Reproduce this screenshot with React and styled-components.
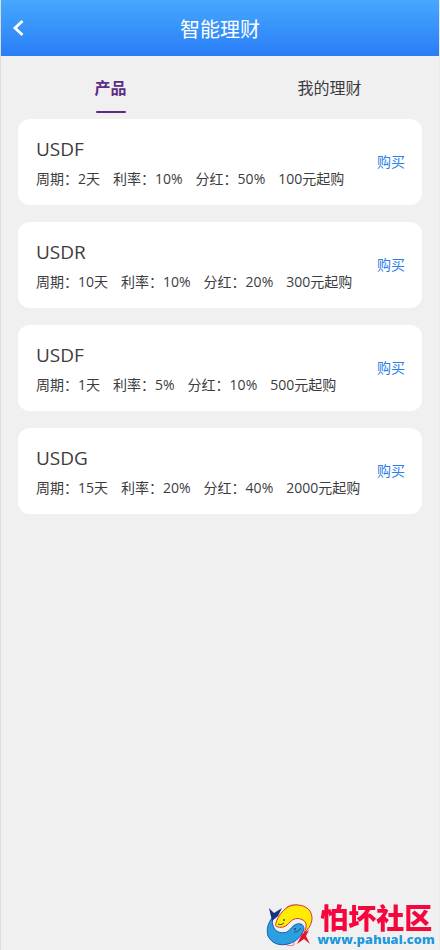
import { useState } from "react";
import styled, { createGlobalStyle } from "styled-components";

const palette = {
  text: "#3c3c3e",
  purple: "#5b2d82",
  blue: "#2d7fe6",
  page: "#f1f0f1",
};

const GlobalStyle = createGlobalStyle`
  * {
    box-sizing: border-box;
  }
  body {
    margin: 0;
    background: ${palette.page};
    color: ${palette.text};
    font-family: "Open Sans", "Noto Sans CJK SC", sans-serif;
  }
  button {
    border: 0;
    padding: 0;
    background: none;
    font-family: inherit;
    cursor: pointer;
  }
`;

const Page = styled.div`
  min-height: 100vh;
  border-left: 1px solid #dcdbe0;
  border-right: 1px solid #eae9ee;
`;

const Header = styled.header`
  display: grid;
  grid-template-columns: 34px 1fr 34px;
  align-items: center;
  height: 56px;
  background: linear-gradient(#46a8ff, #2a7df6);
  color: white;
`;

const BackButton = styled.button`
  display: flex;
  justify-content: center;
  color: white;
`;

const Title = styled.h1`
  margin: 0;
  padding-top: 4px;
  text-align: center;
  font-size: 20px;
  font-weight: 400;
  line-height: 28px;
`;

const Tabs = styled.nav`
  display: flex;
`;

const Tab = styled.button`
  flex: 1;
  display: flex;
  flex-direction: column;
  align-items: center;
  gap: 11px;
  padding-top: 20px;
  color: ${(props) => (props.$active ? palette.purple : palette.text)};
  font-size: 16px;
  font-weight: ${(props) => (props.$active ? 700 : 400)};
  line-height: 24px;
  &::after {
    content: "";
    width: 30px;
    height: 2px;
    border-radius: 1px;
    background: ${(props) => (props.$active ? palette.purple : "transparent")};
  }
`;

const List = styled.ul`
  display: flex;
  flex-direction: column;
  gap: 17px;
  margin: 0;
  padding: 6px 17px 80px;
  list-style: none;
`;

const Card = styled.li`
  display: flex;
  align-items: center;
  justify-content: space-between;
  padding: 16px 17px 16px 18px;
  border-radius: 12px;
  background: white;
`;

const Name = styled.h2`
  margin: 0 0 6px;
  font-size: 19px;
  font-weight: 400;
  line-height: 28px;
`;

const Terms = styled.div`
  display: flex;
  gap: 13px;
  font-size: 14px;
  line-height: 20px;
  white-space: nowrap;
`;

const BuyButton = styled.button`
  color: ${palette.blue};
  font-size: 14px;
  line-height: 20px;
  white-space: nowrap;
`;

const Community = styled.a`
  position: fixed;
  right: 5px;
  bottom: 3px;
  display: flex;
  align-items: center;
  gap: 3px;
  text-decoration: none;
`;

const CommunityText = styled.span`
  display: flex;
  flex-direction: column;
  align-items: center;
`;

const CommunityName = styled.span`
  color: #f5063c;
  font-family: "Noto Sans CJK SC", sans-serif;
  font-size: 28px;
  font-weight: 900;
  line-height: 28px;
`;

const CommunityUrl = styled.span`
  color: #2299dd;
  font-size: 13px;
  font-weight: 800;
  line-height: 16px;
`;

const products = [
  { id: 1, name: "USDF", days: 2, rate: 10, bonus: 50, min: 100 },
  { id: 2, name: "USDR", days: 10, rate: 10, bonus: 20, min: 300 },
  { id: 3, name: "USDF", days: 1, rate: 5, bonus: 10, min: 500 },
  { id: 4, name: "USDG", days: 15, rate: 20, bonus: 40, min: 2000 },
];

const FishLogo = () => (
  <svg width="48" height="44" viewBox="0 0 48 44" aria-hidden="true">
    <path d="M20 5Q24 1 31 2V5M18 41Q24 44 28 42V38" fill="none" stroke="#e0808c" />
    {/* yellow fish */}
    <path
      d="M10 20C12 13 16 8 22 4C29 0 40 2 44 8C48 15 46 23 38 30C41 24 41 19 37 17C31 14 27 16 24 19C20 24 16 25 12 24C9 23 9 22 10 20Z"
      fill="#ffec00"
      stroke="#d9303a"
    />
    {/* blue fish */}
    <path
      d="M7 14C2 19 0 27 2 33C6 41 14 43 22 41C30 39 36 33 38 26C38 22 35 20 31 21C26 22 25 27 21 29C16 31 10 29 8 25C6 21 6 18 7 14Z"
      fill="#2aa0e2"
      stroke="#2257a8"
    />
    {/* tails */}
    <path d="M3 5L8 10L16 5L12 13L6 18Z" fill="#17337f" />
    <path d="M43 27L40 33L44 41L38 36L31 41L36 31Z" fill="#e3142c" />
    <path d="M12 21Q15 23 18 20M28 29Q32 30 35 25" fill="none" stroke="#39506a" />
    <circle cx="18" cy="17" r="1" fill="#39506a" />
    <circle cx="29" cy="26" r="1" fill="#24407c" />
  </svg>
);

const App = () => {
  const [tab, setTab] = useState("products");

  return (
    <Page>
      <GlobalStyle />
      <Header>
        <BackButton aria-label="返回">
          <svg width="12" height="18" viewBox="0 0 12 18" fill="none">
            <path d="M10.5 2L3 9L10.5 16" stroke="currentColor" strokeWidth="2.8" />
          </svg>
        </BackButton>
        <Title>智能理财</Title>
      </Header>
      <Tabs>
        <Tab $active={tab === "products"} onClick={() => setTab("products")}>
          产品
        </Tab>
        <Tab $active={tab === "mine"} onClick={() => setTab("mine")}>
          我的理财
        </Tab>
      </Tabs>
      {tab === "products" && (
        <List>
          {products.map((item) => (
            <Card key={item.id}>
              <div>
                <Name>{item.name}</Name>
                <Terms>
                  <span>周期：{item.days}天</span>
                  <span>利率：{item.rate}%</span>
                  <span>分红：{item.bonus}%</span>
                  <span>{item.min}元起购</span>
                </Terms>
              </div>
              <BuyButton>购买</BuyButton>
            </Card>
          ))}
        </List>
      )}
      <Community href="#community">
        <FishLogo />
        <CommunityText>
          <CommunityName>怕坏社区</CommunityName>
          <CommunityUrl>www.pahuai.com</CommunityUrl>
        </CommunityText>
      </Community>
    </Page>
  );
};

export default App;
